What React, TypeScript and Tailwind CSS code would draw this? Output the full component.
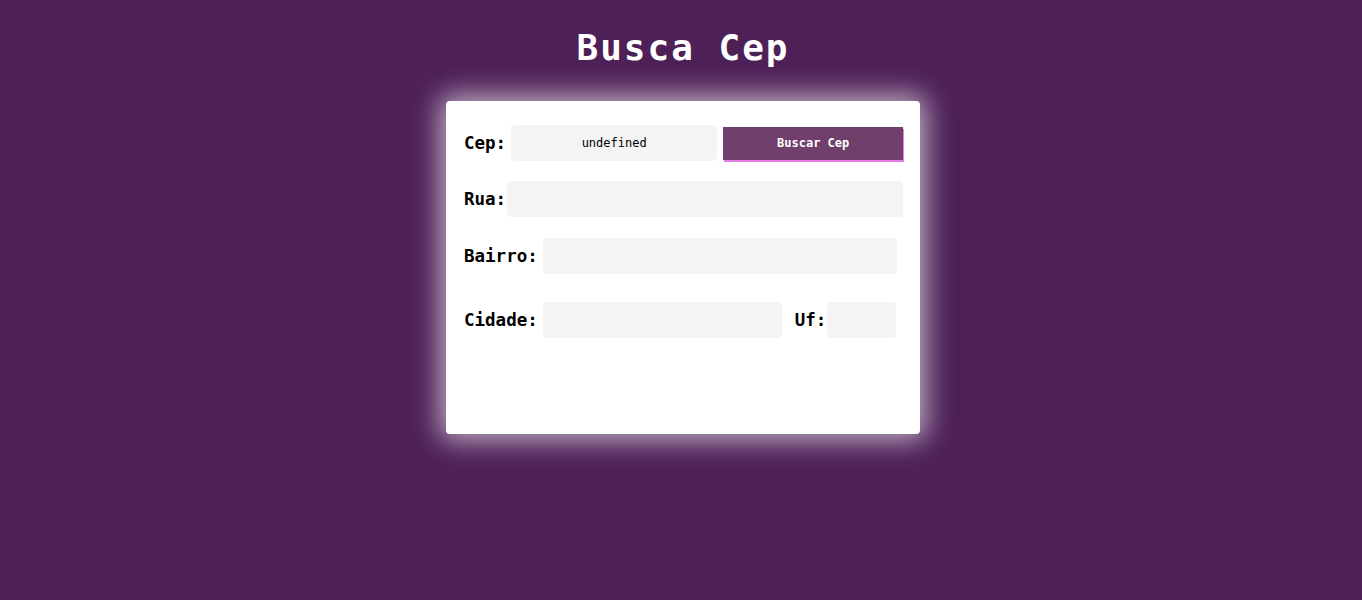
export default function App() {
  const mono = { fontFamily: '"DejaVu Sans Mono", "Liberation Mono", monospace' }

  return (
    <div
      className="min-h-[600px] w-full bg-[#4d2058] flex flex-col items-center"
      style={mono}
    >
      <h1 className="mt-[27px] ml-[4px] text-[36px] leading-[42px] font-bold text-white tracking-[2px]">
        Busca Cep
      </h1>

      <div className="mt-[32px] ml-[4px] w-[474px] h-[333px] bg-white rounded-[4px] shadow-[0_0_28px_6px_rgba(255,255,255,0.65)] pl-[18px] pt-[24px]">
        <div className="flex items-center">
          <label className="text-[17.5px] font-bold text-black">Cep:</label>
          <input
            readOnly
            value="undefined"
            className="ml-[5px] w-[206px] h-[36px] bg-[#f4f4f4] rounded-[4px] text-center text-[12px] text-black outline-none"
            style={mono}
          />
          <button
            type="button"
            className="ml-[6px] w-[180px] h-[33px] bg-[#713f6c] text-white text-[12px] font-bold shadow-[1px_2px_0_#e57ee6]"
            style={mono}
          >
            Buscar Cep
          </button>
        </div>

        <div className="flex items-center mt-[20px]">
          <label className="text-[17.5px] font-bold text-black">Rua:</label>
          <input
            readOnly
            className="ml-[1px] w-[396px] h-[36px] bg-[#f4f4f4] rounded-[4px] outline-none"
          />
        </div>

        <div className="flex items-center mt-[21px]">
          <label className="text-[17.5px] font-bold text-black">Bairro:</label>
          <input
            readOnly
            className="ml-[5px] w-[354px] h-[36px] bg-[#f4f4f4] rounded-[4px] outline-none"
          />
        </div>

        <div className="flex items-center mt-[28px]">
          <label className="text-[17.5px] font-bold text-black">Cidade:</label>
          <input
            readOnly
            className="ml-[5px] w-[239px] h-[36px] bg-[#f4f4f4] rounded-[4px] outline-none"
          />
          <label className="ml-[13px] text-[17.5px] font-bold text-black">Uf:</label>
          <input
            readOnly
            className="ml-[1px] w-[69px] h-[36px] bg-[#f4f4f4] rounded-[4px] outline-none"
          />
        </div>
      </div>
    </div>
  )
}
